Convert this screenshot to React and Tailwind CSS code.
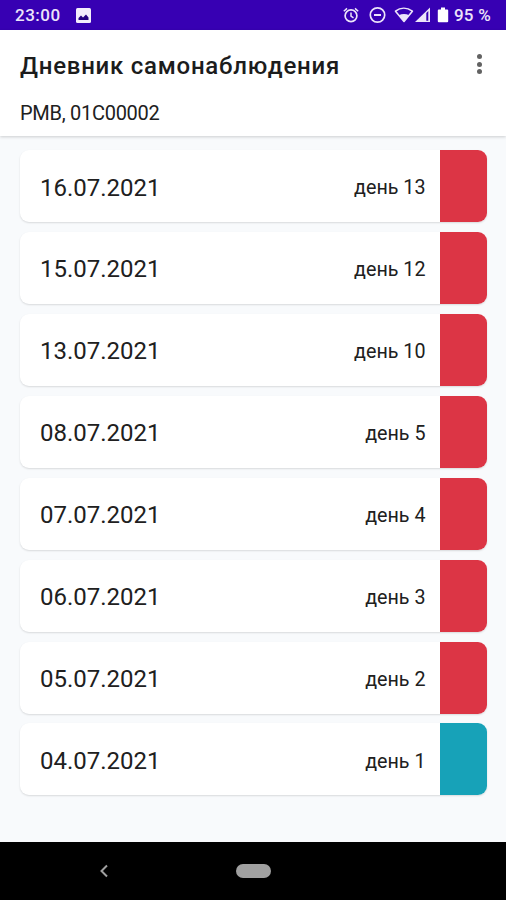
const entries = [
  { date: "16.07.2021", day: 13 },
  { date: "15.07.2021", day: 12 },
  { date: "13.07.2021", day: 10 },
  { date: "08.07.2021", day: 5 },
  { date: "07.07.2021", day: 4 },
  { date: "06.07.2021", day: 3 },
  { date: "05.07.2021", day: 2 },
  { date: "04.07.2021", day: 1, done: true },
];

function StatusBar() {
  return (
    <div className="flex h-[30px] shrink-0 items-center bg-[#3700b3] pl-[15px] text-[#ece4fa]">
      <span className="w-[61px] text-[17px] leading-[30px] font-medium tracking-[0.5px]">23:00</span>
      <svg width="15" height="15" viewBox="0 0 15 15" className="mt-px">
        <rect width="15" height="15" rx="1.5" fill="#f3edfc" />
        <path d="M2.5 12V10L5 7.5l2 2L10 6.5l2.5 3V12Z" fill="#240080" />
      </svg>
      <svg width="108" height="20" viewBox="0 0 108 20" className="ml-auto" fill="none" stroke="currentColor">
        <circle cx="9" cy="10.8" r="5.9" strokeWidth="1.7" />
        <path d="M9 7.5v3.7l2.5 1.6M1.8 6.2l3.2-2.8M16.2 6.2L13 3.4" strokeWidth="1.5" />
        <circle cx="35.5" cy="10" r="7.2" strokeWidth="1.7" />
        <path d="M32 10h7" strokeWidth="2" />
        <path d="M53.5 6.2C58.5 2.3 65 2.3 70.4 6.2L62 16.4Z" strokeWidth="1.6" strokeLinejoin="round" />
        <path d="M56.8 10.2Q62 8 67.2 10.2L62 16.5Z" fill="currentColor" stroke="none" />
        <path d="M73 17L88 2.5V17Z" fill="currentColor" stroke="none" />
        <path d="M84.3 8v7.7h2V6.1Z" fill="#3700b3" stroke="none" />
        <path d="M99 2.5h4v2h2.200q1 0 1 1v10.8q0 1-1 1h-8.4q-1 0-1-1V5.5q0-1 1-1H99Z" fill="#ffffff" stroke="none" />
      </svg>
      <span className="mr-[14px] ml-[4px] w-[38px] text-[17px] leading-[30px] font-medium tracking-[0.2px] whitespace-nowrap">
        95 %
      </span>
    </div>
  );
}

function Header() {
  return (
    <header className="z-10 flex h-[106px] shrink-0 justify-between bg-white pr-[24px] pl-5 shadow-[0_1px_3px_rgba(0,0,0,0.18)]">
      <div>
        <h1 className="mt-[20px] text-[24px] leading-8 font-medium tracking-[0.75px] whitespace-nowrap text-[#1c1c1c]">
          Дневник самонаблюдения
        </h1>
        <p className="mt-[19px] text-[20px] leading-6 tracking-[-0.28px] text-[#202020]">РМВ, 01С00002</p>
      </div>
      <div className="mt-[24px] flex flex-col gap-[2.5px]">
        <i className="size-[5px] rounded-full bg-[#626262]" />
        <i className="size-[5px] rounded-full bg-[#626262]" />
        <i className="size-[5px] rounded-full bg-[#626262]" />
      </div>
    </header>
  );
}

function Entry({ date, day, done }) {
  return (
    <li className="flex h-[72px] items-stretch overflow-hidden rounded-[9px] bg-white shadow-[0_1px_2px_rgba(0,0,0,0.13)]">
      <span className="flex flex-1 items-center pt-[3px] pl-5 text-[24px] text-[#202020]">{date}</span>
      <span className="flex items-center pt-[4px] pr-[14.5px] text-[19.7px] text-[#202020]">день {day}</span>
      <span className={done ? "w-[47px] bg-[#17a2b8]" : "w-[47px] bg-[#dc3545]"} />
    </li>
  );
}

export default function App() {
  return (
    <div className="flex h-[900px] w-[506px] flex-col overflow-hidden bg-[#f8fafc] font-[Roboto,sans-serif]">
      <StatusBar />
      <Header />
      <ul className="flex flex-1 flex-col gap-[9.93px] pt-[14px] pr-[19px] pl-5">
        {entries.map((entry) => (
          <Entry key={entry.date} {...entry} />
        ))}
      </ul>
      <nav className="flex h-[58px] shrink-0 items-center bg-black">
        <svg width="10" height="14" viewBox="0 0 10 14" className="ml-[99px]">
          <path d="M8 1.5L2.500 7L8 12.500" fill="none" stroke="#a0a0a0" strokeWidth="2" />
        </svg>
        <i className="ml-[127px] h-[14px] w-[35px] rounded-full bg-[#a0a0a0]" />
      </nav>
    </div>
  );
}
